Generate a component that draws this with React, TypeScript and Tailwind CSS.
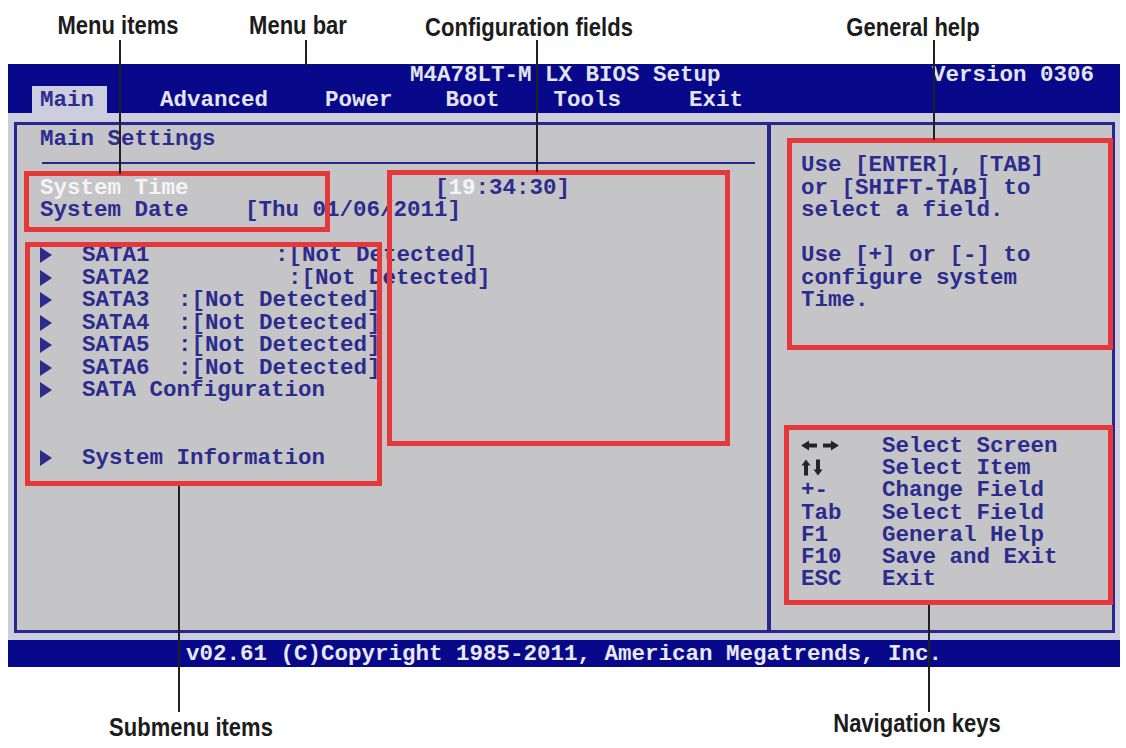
import React from 'react';

const mono = "font-['Liberation_Mono','Courier_New',monospace] font-bold";
const navyText = 'text-[#2c2c8e]';

type Sata = { name: string; col: string; value: string };

const sataRows: Sata[] = [
  { name: 'SATA1', col: 'w-[193px]', value: ':[Not Detected]' },
  { name: 'SATA2', col: 'w-[206px]', value: ':[Not Detected]' },
  { name: 'SATA3', col: 'w-[96px]', value: ':[Not Detected]' },
  { name: 'SATA4', col: 'w-[96px]', value: ':[Not Detected]' },
  { name: 'SATA5', col: 'w-[96px]', value: ':[Not Detected]' },
  { name: 'SATA6', col: 'w-[96px]', value: ':[Not Detected]' },
];

const helpLines = [
  'Use [ENTER], [TAB]',
  'or [SHIFT-TAB] to',
  'select a field.',
  '',
  'Use [+] or [-] to',
  'configure system',
  'Time.',
];

const navKeys: { key: React.ReactNode; desc: string }[] = [
  { key: <LeftRight />, desc: 'Select Screen' },
  { key: <UpDown />, desc: 'Select Item' },
  { key: '+-', desc: 'Change Field' },
  { key: 'Tab', desc: 'Select Field' },
  { key: 'F1', desc: 'General Help' },
  { key: 'F10', desc: 'Save and Exit' },
  { key: 'ESC', desc: 'Exit' },
];

function LeftRight() {
  return (
    <svg width="38" height="11" viewBox="0 0 38 11" className="text-[#24242c]">
      <path d="M0 5.5 L8 0.5 L8 3.5 L16 3.5 L16 7.5 L8 7.5 L8 10.5 Z" fill="currentColor" />
      <path d="M38 5.5 L30 0.5 L30 3.5 L22 3.5 L22 7.5 L30 7.5 L30 10.5 Z" fill="currentColor" />
    </svg>
  );
}

function UpDown() {
  return (
    <svg width="22" height="17" viewBox="0 0 22 17" className="text-[#24242c]">
      <path d="M5 0.5 L9.5 6.5 L7 6.5 L7 16.5 L3 16.5 L3 6.5 L0.5 6.5 Z" fill="currentColor" />
      <path d="M17 16.5 L21.5 10.5 L19 10.5 L19 0.5 L15 0.5 L15 10.5 L12.5 10.5 Z" fill="currentColor" />
    </svg>
  );
}

function Arrow() {
  return (
    <svg width="12" height="16" viewBox="0 0 12 16" className="shrink-0 text-[#2c2c8e]">
      <path d="M0 0 L12 8 L0 16 Z" fill="currentColor" />
    </svg>
  );
}

function Callout({ label, x, y }: { label: string; x: number; y: number }) {
  return (
    <div
      className="absolute -translate-x-1/2 -translate-y-1/2 scale-x-[0.88] whitespace-nowrap font-['Liberation_Sans',Arial,sans-serif] text-[25px] font-bold leading-none text-[#1c1c1c]"
      style={{ left: x, top: y }}
    >
      {label}
    </div>
  );
}

function Leader({ x, y1, y2 }: { x: number; y1: number; y2: number }) {
  return <div className="absolute w-[1.5px] bg-[#202020]" style={{ left: x, top: y1, height: y2 - y1 }} />;
}

function RedBox({ x, y, w, h }: { x: number; y: number; w: number; h: number }) {
  return <div className="absolute border-[5px] border-[#e4383b]" style={{ left: x, top: y, width: w, height: h }} />;
}

export default function App() {
  return (
    <div className="relative h-[748px] w-[1126px] overflow-hidden bg-white">
      <div className="h-[64px]" />

      {/* BIOS screen */}
      <div className={`ml-[8px] w-[1112px] ${mono} text-[22.5px] leading-[22px]`}>
        {/* header */}
        <div className="bg-[#08088a] text-[#e4e4ec]">
          <div className="flex h-[22px] items-center pl-[402px] pr-[26px]">
            <span>M4A78LT-M LX BIOS Setup</span>
            <span className="ml-auto">Version 0306</span>
          </div>
          <div className="flex h-[27px] items-stretch pl-[24px]">
            <span className="flex items-center bg-[#cdcde0] pl-[8px] pr-[13px] text-[#2c2c8e]">Main</span>
            <span className="ml-[53px] flex items-center">Advanced</span>
            <span className="ml-[57px] flex items-center">Power</span>
            <span className="ml-[53px] flex items-center">Boot</span>
            <span className="ml-[54px] flex items-center">Tools</span>
            <span className="ml-[68px] flex items-center">Exit</span>
          </div>
        </div>

        {/* body */}
        <div className="bg-[#cdcde0] pb-[7px] pl-[6px] pr-[5px] pt-[9px]">
          <div className={`flex h-[511px] border-[3px] border-[#26268e] bg-[#c5c5c7] ${navyText}`}>
            {/* left: settings */}
            <div className="w-[750px] pl-[23px] pt-[3px]">
              <div className="h-[22.5px]">Main Settings</div>
              <div className="mb-[13px] ml-[2px] mr-[12px] mt-[11px] h-[2px] bg-[#26268e]" />
              <div className="flex h-[22.5px]">
                <span className="w-[395px] text-[#f4f4f8]">System Time</span>
                <span>
                  [<span className="text-[#f4f4f8]">19</span>:34:30]
                </span>
              </div>
              <div className="flex h-[22.5px]">
                <span className="w-[205px]">System Date</span>
                <span>[Thu 01/06/2011]</span>
              </div>
              <div className="h-[22.5px]" />
              {sataRows.map((r) => (
                <div key={r.name} className="flex h-[22.5px] items-center">
                  <Arrow />
                  <span className={`ml-[30px] ${r.col}`}>{r.name}</span>
                  <span>{r.value}</span>
                </div>
              ))}
              <div className="flex h-[22.5px] items-center">
                <Arrow />
                <span className="ml-[30px]">SATA Configuration</span>
              </div>
              <div className="h-[45px]" />
              <div className="flex h-[22.5px] items-center">
                <Arrow />
                <span className="ml-[30px]">System Information</span>
              </div>
            </div>

            <div className="w-[4px] bg-[#26268e]" />

            {/* right: help and keys */}
            <div className="flex-1 pl-[30px] pt-[29px]">
              {helpLines.map((l, i) => (
                <div key={i} className="h-[22.5px] whitespace-pre">
                  {l}
                </div>
              ))}
              <div className="mt-[123px]">
                {navKeys.map((k) => (
                  <div key={k.desc} className="flex h-[22.3px] items-center">
                    <span className="flex w-[81px] items-center">{k.key}</span>
                    <span>{k.desc}</span>
                  </div>
                ))}
              </div>
            </div>
          </div>
        </div>

        {/* footer */}
        <div className="flex h-[27px] items-center bg-[#08088a] pl-[178px] text-[#e8e8f0]">
          v02.61 (C)Copyright 1985-2011, American Megatrends, Inc.
        </div>
      </div>

      {/* annotation boxes */}
      <RedBox x={24} y={171} w={306} h={61} />
      <RedBox x={387} y={170} w={343} h={276} />
      <RedBox x={25} y={242} w={357} h={244} />
      <RedBox x={787} y={138} w={326} h={212} />
      <RedBox x={784} y={425} w={329} h={180} />

      {/* leader lines */}
      <Leader x={119} y1={40} y2={174} />
      <Leader x={305} y1={40} y2={66} />
      <Leader x={536} y1={40} y2={172} />
      <Leader x={933} y1={40} y2={140} />
      <Leader x={178} y1={486} y2={712} />
      <Leader x={928} y1={605} y2={712} />

      <Callout label="Menu items" x={118} y={25} />
      <Callout label="Menu bar" x={298} y={25} />
      <Callout label="Configuration fields" x={529} y={27} />
      <Callout label="General help" x={913} y={27} />
      <Callout label="Submenu items" x={191} y={727} />
      <Callout label="Navigation keys" x={917} y={723} />
    </div>
  );
}
